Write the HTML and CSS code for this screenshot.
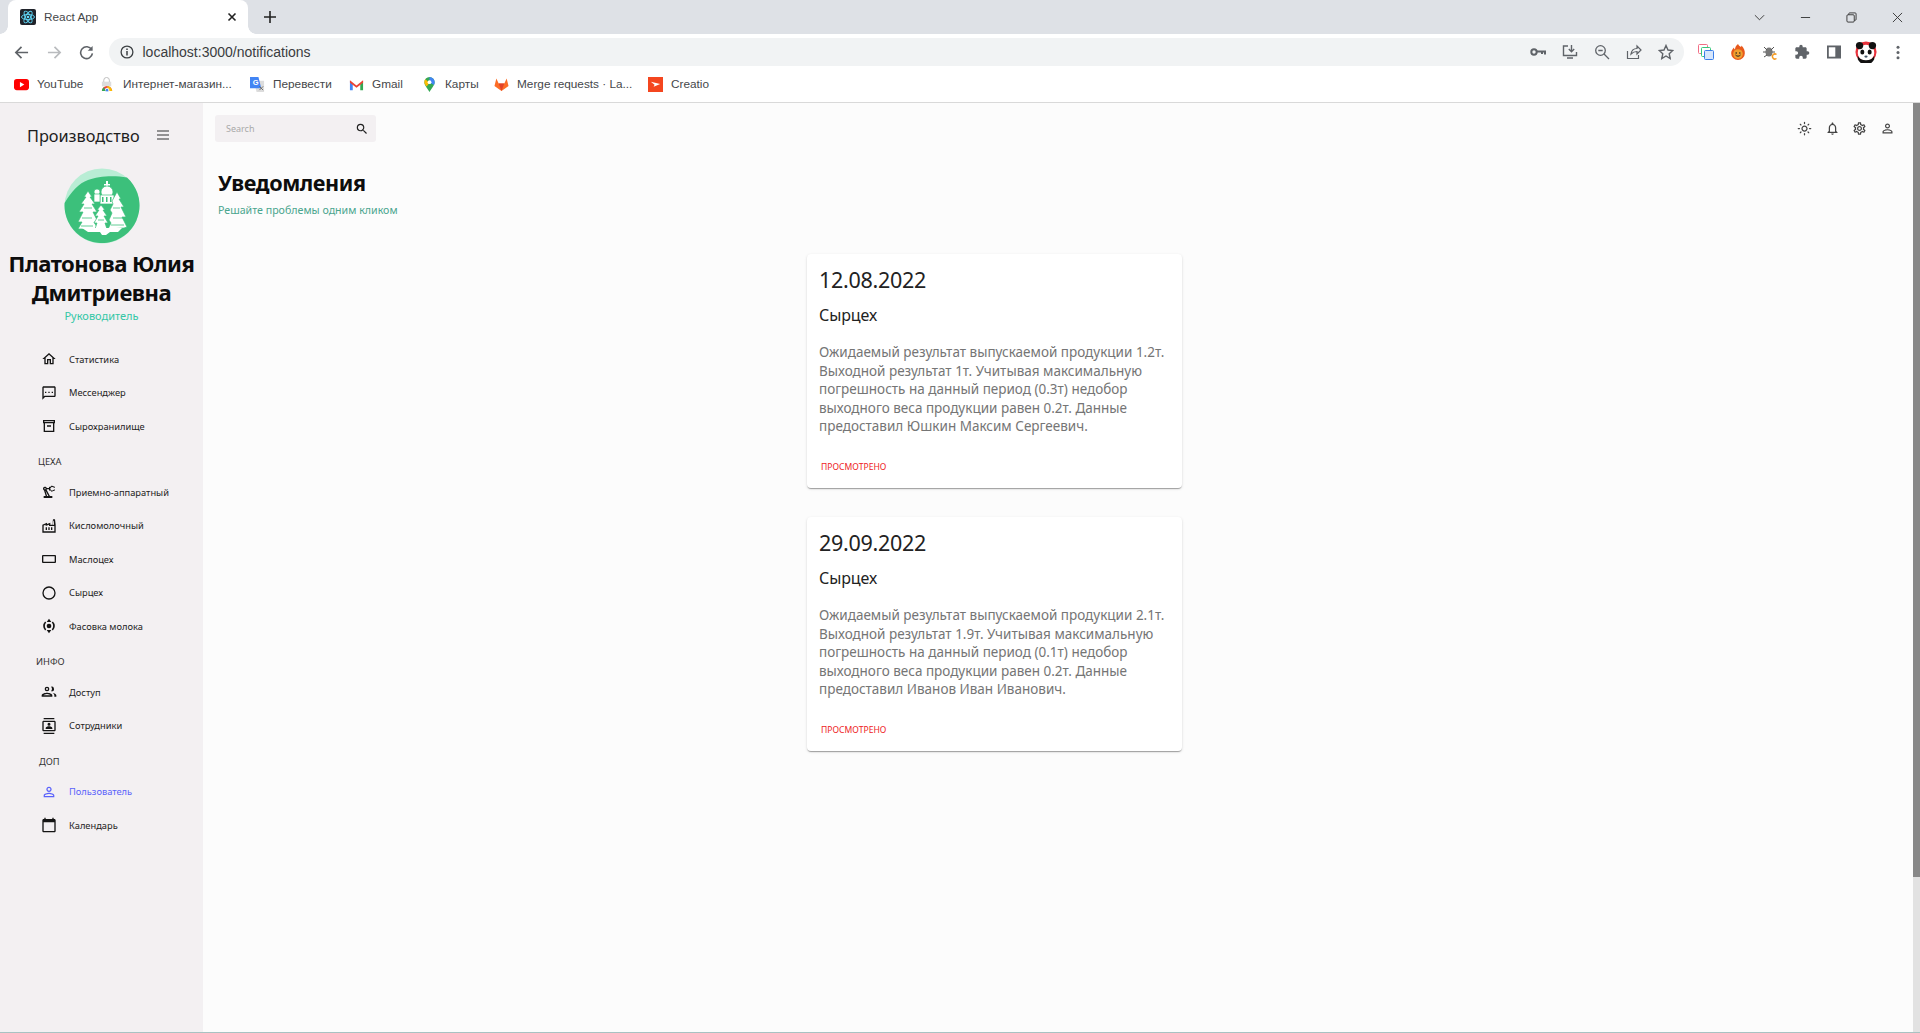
FILE: index.html
```html
<!DOCTYPE html>
<html lang="ru">
<head>
<meta charset="utf-8">
<title>React App</title>
<link rel="stylesheet" href="styles.css">
</head>
<body>
<header class="chrome">
  <div class="tabstrip">
    <div class="tab">
      <svg class="fav" viewBox="0 0 16 16"><rect width="16" height="16" rx="2" fill="#20232a"/><g fill="none" stroke="#61dafb" stroke-width=".9"><ellipse cx="8" cy="8" rx="6.5" ry="2.6"/><ellipse cx="8" cy="8" rx="6.5" ry="2.6" transform="rotate(60 8 8)"/><ellipse cx="8" cy="8" rx="6.5" ry="2.6" transform="rotate(120 8 8)"/></g><circle cx="8" cy="8" r="1.3" fill="#61dafb"/></svg>
      <span class="tabtitle">React App</span>
      <svg class="tabx" viewBox="0 0 10 10"><path d="M1.5 1.5l7 7M8.5 1.5l-7 7" stroke="#222" stroke-width="1.6"/></svg>
    </div>
    <svg class="plus" viewBox="0 0 12 12"><path d="M6 0v12M0 6h12" stroke="#222" stroke-width="1.6"/></svg>
    <div class="winbtns">
      <svg viewBox="0 0 12 8"><path d="M1 1.5l5 5 5-5" fill="none" stroke="#333" stroke-width="1"/></svg>
      <svg viewBox="0 0 12 12"><path d="M1 6h10" stroke="#333" stroke-width="1"/></svg>
      <svg viewBox="0 0 12 12"><path d="M3 3V2a1 1 0 0 1 1-1h6a1 1 0 0 1 1 1v6a1 1 0 0 1-1 1H9" fill="none" stroke="#333"/><rect x="1" y="3" width="8" height="8" rx="1.2" fill="none" stroke="#333"/></svg>
      <svg viewBox="0 0 12 12"><path d="M1 1l10 10M11 1L1 11" stroke="#333" stroke-width="1"/></svg>
    </div>
  </div>
  <div class="toolbar">
    <svg class="nav" viewBox="0 0 16 16"><path d="M15 8H2M8 2L2 8l6 6" fill="none" stroke="#5f6368" stroke-width="1.8"/></svg>
    <svg class="nav" viewBox="0 0 16 16"><path d="M1 8h13M8 2l6 6-6 6" fill="none" stroke="#b9bbbe" stroke-width="1.8"/></svg>
    <svg class="nav" viewBox="0 0 16 16"><path d="M13.5 5A6.3 6.3 0 1 0 14.3 9" fill="none" stroke="#5f6368" stroke-width="1.7"/><path d="M14.5 1v5.2H9.3z" fill="#5f6368"/></svg>
    <div class="omnibox">
      <svg class="info" viewBox="0 0 14 14"><circle cx="7" cy="7" r="5.9" fill="none" stroke="#3c4043" stroke-width="1.3"/><path d="M7 6v4.4M7 3.4v1.5" stroke="#3c4043" stroke-width="1.5"/></svg>
      <span class="url">localhost:3000/notifications</span>
      <div class="omni-icons">
        <svg viewBox="0 0 16 16"><circle cx="4" cy="8" r="2.7" fill="none" stroke="#5f6368" stroke-width="2"/><path d="M6.5 7.5H15v3M12 8v2" fill="none" stroke="#5f6368" stroke-width="2"/></svg>
        <svg viewBox="0 0 16 16"><path d="M6 2H1.5v9.5h13V8M9.5 1v6.5M6.8 5l2.700 2.700L12.200 5M5 14h6" fill="none" stroke="#5f6368" stroke-width="1.4"/></svg>
        <svg viewBox="0 0 16 16"><circle cx="6.5" cy="6.5" r="4.8" fill="none" stroke="#5f6368" stroke-width="1.3"/><path d="M10 10l5 5M4.300 6.500h4.400" stroke="#5f6368" stroke-width="1.3"/></svg>
        <svg viewBox="0 0 16 16"><path d="M1.500 7v7.500h11V11M5 10c.5-3.500 3-5.500 6-5.500V2l4 4-4 4V7.500c-2.500 0-4.500 1-6 2.500z" fill="none" stroke="#5f6368" stroke-width="1.2"/></svg>
        <svg viewBox="0 0 16 16"><path d="M8 1.500l2 4.500 4.800.5-3.600 3.200 1 4.800L8 12l-4.200 2.500 1-4.800L1.200 6.500 6 6z" fill="none" stroke="#5f6368" stroke-width="1.4"/></svg>
      </div>
    </div>
    <div class="ext-icons">
      <svg viewBox="0 0 16 16"><rect x=".5" y=".5" width="9" height="9" rx="1" fill="#fff" stroke="#f26d85"/><rect x="3.500" y="3.500" width="9" height="9" rx="1" fill="#fff" stroke="#34c77b"/><rect x="6.500" y="6.500" width="9" height="9" rx="1" fill="#d6e6fc" stroke="#3a7ee8"/></svg>
      <svg viewBox="0 0 16 16"><path d="M8 0c1 2 2 2.500 3 3 0 0 .5-.8.500-1.500C14 4 15 7 14.800 9.500A6.800 6.500 0 0 1 1.200 9.500C1 7 2.500 5 4 3.500c0 1 .3 1.500 1 2C5 3.500 6 1.500 8 0z" fill="#e8591c"/><circle cx="8" cy="10" r="4.800" fill="#f0a030"/><circle cx="6.200" cy="9" r=".8" fill="#222"/><circle cx="9.800" cy="9" r=".8" fill="#222"/><path d="M5.500 11c1.500 1.600 3.500 1.600 5 0" fill="none" stroke="#222"/></svg>
      <svg viewBox="0 0 16 16"><ellipse cx="7" cy="8" rx="3.500" ry="4.500" fill="#777"/><path d="M2 3l3 3M12 3L9 6M1 8h3M10 8h3M2 13l3-2" stroke="#555" stroke-width="1"/><path d="M14.500 10.500a2.500 2.500 0 1 0 0 4" fill="none" stroke="#f59b23" stroke-width="1.500"/></svg>
      <svg viewBox="0 0 24 24"><path d="M20.500 11H19V7c0-1.100-.9-2-2-2h-4V3.500a2.500 2.500 0 0 0-5 0V5H4c-1.100 0-2 .9-2 2v3.800h1.500a2.700 2.700 0 0 1 0 5.400H2V20c0 1.100.9 2 2 2h3.800v-1.500a2.700 2.700 0 0 1 5.400 0V22H17c1.100 0 2-.9 2-2v-4h1.500a2.500 2.500 0 0 0 0-5z" fill="#5f6368"/></svg>
      <svg viewBox="0 0 16 16"><rect x="1" y="1.500" width="14" height="13" fill="#5f6368"/><rect x="2.800" y="3.300" width="6.500" height="9.400" fill="#fff"/></svg>
      <svg class="panda" viewBox="0 0 24 24"><circle cx="12" cy="12" r="11.500" fill="#e8323c"/><circle cx="12" cy="13" r="9" fill="#fff"/><circle cx="5" cy="5" r="4" fill="#111"/><circle cx="19" cy="5" r="4" fill="#111"/><ellipse cx="8" cy="12" rx="2.200" ry="2.800" fill="#111"/><ellipse cx="16" cy="12" rx="2.200" ry="2.800" fill="#111"/><ellipse cx="12" cy="17" rx="1.800" ry="1.200" fill="#456"/><path d="M3 16a10 9 0 0 0 18 0v4a10 10 0 0 1-18 0z" fill="#111"/></svg>
      <svg class="dots" viewBox="0 0 4 16"><circle cx="2" cy="2.500" r="1.600" fill="#5f6368"/><circle cx="2" cy="8" r="1.600" fill="#5f6368"/><circle cx="2" cy="13.500" r="1.600" fill="#5f6368"/></svg>
    </div>
  </div>
  <div class="bookmarks">
    <a class="bm bm-yt"><svg viewBox="0 0 16 16"><rect y="2" width="16" height="12" rx="3" fill="#f00"/><path d="M6.300 5.200v5.600L11 8z" fill="#fff"/></svg>YouTube</a>
    <a class="bm bm-shop"><svg viewBox="0 0 16 16"><path d="M4 6V3.500a3 3 0 0 1 6 0V6" fill="none" stroke="#bbb"/><rect x="2" y="5" width="10" height="5" fill="#ddd"/><path d="M2 15a5.500 5.500 0 0 1 11 0z" fill="#e8453c"/><path d="M7.500 9.500A5.500 5.500 0 0 1 13 15H9z" fill="#fbbc04"/><circle cx="7.500" cy="14" r="2" fill="#4285f4" stroke="#fff"/><path d="M2 15a5 5 0 0 1 2-4l2 4z" fill="#34a853"/></svg>Интернет-магазин...</a>
    <a class="bm bm-tr"><svg viewBox="0 0 16 16"><path d="M4 4h11v12H7z" fill="#ddd"/><path d="M0 0h9l3 12H0z" fill="#4285f4"/><text x="3" y="9" class="gtext">G</text><path d="M10 10l4 4M14 10l-4 4" stroke="#666"/></svg>Перевести</a>
    <a class="bm bm-gm"><svg viewBox="0 0 16 16"><path d="M1 4v10h3V7z" fill="#4285f4"/><path d="M15 4v10h-3V7z" fill="#34a853"/><path d="M1 3.500L8 9l7-5.500V6L8 11.500 1 6z" fill="#ea4335"/></svg>Gmail</a>
    <a class="bm bm-map"><svg viewBox="0 0 16 16"><path d="M8 0a5.500 5.500 0 0 0-5.500 5.500C2.500 9 6 12 8 16c2-4 5.500-7 5.500-10.500A5.500 5.500 0 0 0 8 0z" fill="#34a853"/><path d="M8 0a5.500 5.500 0 0 1 5.500 5.500c0 1-.3 2-.8 3L8 5.500z" fill="#4285f4"/><path d="M3.500 2.500L8 6 5 10C3.500 8.500 2.500 7 2.500 5.500c0-1 .3-2.200 1-3z" fill="#fbbc04"/><circle cx="8" cy="5.500" r="2" fill="#fff"/></svg>Карты</a>
    <a class="bm bm-gl"><svg viewBox="0 0 16 16"><path d="M8 15L.5 9.500 2.500 1.500 5 7h6l2.500-5.500 2 8z" fill="#fc6d26"/><path d="M8 15L5 7h6z" fill="#e24329"/></svg>Merge requests · La...</a>
    <a class="bm bm-cr"><svg viewBox="0 0 16 16"><rect width="16" height="16" fill="#f4461f"/><path d="M3 5l10 2.500L6 10.500l1-2.200z" fill="#fff"/></svg>Creatio</a>
  </div>
</header>

<div class="app">
  <aside class="sidebar">
    <div class="brand"><span class="brand-name">Производство</span>
      <svg class="burger" viewBox="0 0 12 10"><path d="M0 1h12M0 5h12M0 9h12" stroke="#333" stroke-width="1.100"/></svg></div>
    <div class="profile">
      <svg class="avatar" viewBox="0 0 76 76">
        <circle cx="38" cy="38" r="37.500" fill="#b9edd5"/>
        <path d="M.6 35C7 24 15 15 24 12 34 8 50 7 63 9.500A37.500 37.500 0 1 1 .6 35z" fill="#3cc07b"/>
        <g fill="#fff" stroke="#3cc07b" stroke-width=".7">
          <path stroke="none" d="M42 13h2v3h2v1.500h-2v2h-2v-2h-2V16h2z"/>
          <circle cx="43" cy="24" r="6"/>
          <rect x="36" y="27" width="14" height="9"/>
          <circle cx="33" cy="24" r="3"/>
          <rect x="30" y="26" width="6" height="8"/>
          <path d="M53 24L57 31 55 31 60 39 57 39 62 49 58 49 63 59 60 60 44 61 47 55 45 52 48 45 46 42 49 36 48 33Z"/>
          <path d="M24 23L28 29 26 29 31 36 28 36 33 44 29 44 34 54 30 54 34 61 14 61 18 54 14 54 19 44 15 44 20 36 17 36 22 29 20 29Z"/>
          <path d="M37 37L41 42 39 42 43 48 40 48 44 55 41 55 43 61 31 61 33 55 30 55 34 48 31 48 35 42 33 42Z"/>
          <path stroke="none" d="M18 60H58L54 64H46L42 67H38L36 64H24Z"/>
        </g>
        <g fill="#3cc07b"><rect x="38" y="29" width="1.500" height="5"/><rect x="42" y="29" width="1.500" height="5"/><rect x="46" y="29" width="1.500" height="5"/></g>
        <g stroke="#3cc07b" stroke-width=".8" fill="none"><path d="M18 50h10M20 40h8M17 58h12M49 50h10M49 40h7M47 57h13M34 52h6"/></g>
      </svg>
      <h2 class="person">Платонова Юлия Дмитриевна</h2>
      <div class="role">Руководитель</div>
    </div>
    <nav class="menu">
      <a class="item"><svg viewBox="0 0 24 24"><path d="M12 5.690l5 4.500V18h-2v-6H9v6H7v-7.810l5-4.500M12 3L2 12h3v8h6v-6h2v6h6v-8h3L12 3z"/></svg>Статистика</a>
      <a class="item"><svg viewBox="0 0 24 24"><path d="M4 4h16v12H5.170L4 17.170V4m0-2c-1.100 0-1.990.9-1.990 2L2 22l4-4h14c1.100 0 2-.9 2-2V4c0-1.100-.9-2-2-2H4zm2 10h2v-2H6v2zm5 0h2v-2h-2v2zm5 0h2v-2h-2v2z"/></svg>Мессенджер</a>
      <a class="item"><svg viewBox="0 0 24 24"><path d="M3 3h18v5h-1v13H4V8H3V3zm2 2v1h14V5H5zm1 3v11h12V8H6zm3 3h6v2H9v-2z"/></svg>Сырохранилище</a>
      <div class="label lb-ceh">ЦЕХА</div>
      <a class="item"><svg viewBox="0 0 24 24"><path d="M19.930 8.350l-3.600 1.680L14 7.700V6.300l2.330-2.330 3.600 1.680c.38.180.82.010 1-.36.180-.38.010-.82-.36-1L16.650 2.600c-.38-.180-.83-.1-1.130.2l-1.740 1.740C13.600 4.220 13.320 4 13 4c-.55 0-1 .45-1 1v1H8.820C8.340 4.650 6.980 3.730 5.400 4.070c-1.160.25-2.150 1.250-2.360 2.430-.22 1.320.46 2.470 1.480 3.080L7.080 18H4v3h13v-3h-3.620L8.410 8.770c.17-.24.310-.49.41-.77H12v1c0 .55.45 1 1 1 .32 0 .6-.22.78-.54l1.740 1.740c.3.3.75.38 1.130.2l3.920-1.830c.38-.180.54-.62.36-1-.180-.37-.62-.54-1-.36zM6 8c-.55 0-1-.45-1-1 0-.56.45-1 1-1s1 .44 1 1c0 .55-.45 1-1 1zm5.110 10H9.170l-2.460-8h.1l4.300 8z"/></svg>Приемно-аппаратный</a>
      <a class="item"><svg viewBox="0 0 24 24"><path d="M22 22H2V10l7-3v2l5-2v3h3l1-8h3l1 8V22zM12 9.950l-5 2V10l-3 1.320V20h16v-8h-8V9.950zM11 18h2v-4h-2V18zM7 18h2v-4H7V18zM17 14h-2v4h2V14zM19.600 10l-.7-6h-.8l-.7 6H19.600z"/></svg>Кисломолочный</a>
      <a class="item"><svg viewBox="0 0 24 24"><path d="M3 6h18a1.500 1.500 0 0 1 1.500 1.500v9A1.500 1.500 0 0 1 21 18H3a1.500 1.500 0 0 1-1.500-1.500v-9A1.500 1.500 0 0 1 3 6zm.5 2v8h17V8h-17z"/></svg>Маслоцех</a>
      <a class="item"><svg viewBox="0 0 24 24"><path d="M12 2a10 10 0 1 0 0 20 10 10 0 0 0 0-20zm0 18a8 8 0 1 1 0-16 8 8 0 0 1 0 16z"/></svg>Сырцех</a>
      <a class="item"><svg class="ic-stroke" viewBox="0 0 24 24"><path d="M7 6A8.500 8.500 0 0 0 7 18M17 6A8.500 8.500 0 0 1 17 18"/><path class="solid" d="M12 1l3.500 5h-7zM12 23l-3.500-5h7z"/><circle class="solid" cx="12" cy="12" r="3.500"/></svg>Фасовка молока</a>
      <div class="label lb-info">ИНФО</div>
      <a class="item"><svg viewBox="0 0 24 24"><path d="M16 11a3.500 3.500 0 1 0-1-6.850 5 5 0 0 1 0 6.700c.3.100.65.150 1 .150zM9 11a3.500 3.500 0 1 0 0-7 3.500 3.500 0 0 0 0 7zm0-5a1.500 1.500 0 1 1 0 3 1.500 1.500 0 0 1 0-3zm0 7c-2.700 0-8 1.300-8 4v2h16v-2c0-2.700-5.300-4-8-4zm-5.500 4c.6-.7 3-2 5.500-2s4.900 1.300 5.500 2h-11zM17.500 13.500c1.500 1 2.500 2 2.500 3.500v2h3v-2c0-2-3-3.200-5.500-3.500z"/></svg>Доступ</a>
      <a class="item"><svg viewBox="0 0 24 24"><path d="M20 0H4v2h16V0zM4 24h16v-2H4v2zM20 4H4c-1.100 0-2 .9-2 2v12c0 1.100.9 2 2 2h16c1.100 0 2-.9 2-2V6c0-1.100-.9-2-2-2zm0 14H4V6h16v12zm-8-6.250A2.250 2.250 0 1 0 12 7.250a2.250 2.250 0 0 0 0 4.500zM12 12.500c-1.700 0-5 .85-5 2.500V16.500h10V15c0-1.650-3.300-2.500-5-2.500z"/></svg>Сотрудники</a>
      <div class="label lb-dop">ДОП</div>
      <a class="item active"><svg viewBox="0 0 24 24"><path d="M12 5.900a2.100 2.100 0 1 1 0 4.200 2.100 2.100 0 0 1 0-4.200m0 9c2.970 0 6.100 1.460 6.100 2.100v1.100H5.900V17c0-.64 3.130-2.100 6.100-2.100M12 4C9.790 4 8 5.790 8 8s1.790 4 4 4 4-1.790 4-4-1.790-4-4-4zm0 9c-2.670 0-8 1.340-8 4v3h16v-3c0-2.660-5.330-4-8-4z"/></svg>Пользователь</a>
      <a class="item"><svg viewBox="0 0 24 24"><path d="M20 3h-1V1h-2v2H7V1H5v2H4c-1.100 0-2 .9-2 2v16c0 1.100.9 2 2 2h16c1.100 0 2-.9 2-2V5c0-1.100-.9-2-2-2zm0 18H4V8h16v13z"/></svg>Календарь</a>
    </nav>
  </aside>
  <main class="main">
    <div class="topbar">
      <div class="search"><span class="search-ph">Search</span>
        <svg class="search-ic" viewBox="0 0 24 24"><path d="M15.500 14h-.79l-.28-.27A6.470 6.470 0 0 0 16 9.500 6.500 6.500 0 1 0 9.500 16c1.610 0 3.090-.59 4.230-1.570l.27.280v.79l5 4.990L20.490 19l-4.990-5zm-6 0C7.010 14 5 11.990 5 9.500S7.010 5 9.500 5 14 7.010 14 9.500 11.990 14 9.500 14z"/></svg>
      </div>
      <div class="top-icons">
        <svg viewBox="0 0 24 24"><path d="M12 9c1.650 0 3 1.350 3 3s-1.350 3-3 3-3-1.350-3-3 1.350-3 3-3m0-2c-2.760 0-5 2.240-5 5s2.240 5 5 5 5-2.240 5-5-2.240-5-5-5zM2 13h2c.55 0 1-.45 1-1s-.45-1-1-1H2c-.55 0-1 .45-1 1s.45 1 1 1zm18 0h2c.55 0 1-.45 1-1s-.45-1-1-1h-2c-.55 0-1 .45-1 1s.45 1 1 1zM11 2v2c0 .55.45 1 1 1s1-.45 1-1V2c0-.55-.45-1-1-1s-1 .45-1 1zm0 18v2c0 .55.45 1 1 1s1-.45 1-1v-2c0-.55-.45-1-1-1s-1 .45-1 1zM5.990 4.580a.996.996 0 0 0-1.410 0 .996.996 0 0 0 0 1.410l1.060 1.060c.39.39 1.030.39 1.410 0s.39-1.030 0-1.410L5.990 4.580zm12.370 12.370a.996.996 0 0 0-1.410 0 .996.996 0 0 0 0 1.410l1.060 1.060c.39.39 1.030.39 1.410 0a.996.996 0 0 0 0-1.410l-1.060-1.060zm1.060-10.960a.996.996 0 0 0 0-1.410.996.996 0 0 0-1.410 0l-1.060 1.060c-.39.39-.39 1.030 0 1.410s1.030.39 1.410 0l1.060-1.060zM7.050 18.360a.996.996 0 0 0 0-1.410.996.996 0 0 0-1.410 0l-1.060 1.060c-.39.39-.39 1.030 0 1.410s1.030.39 1.410 0l1.060-1.060z"/></svg>
        <svg viewBox="0 0 24 24"><path d="M12 22c1.100 0 2-.9 2-2h-4c0 1.100.9 2 2 2zm6-6v-5c0-3.070-1.630-5.640-4.500-6.320V4c0-.83-.67-1.500-1.500-1.500s-1.500.67-1.500 1.500v.68C7.640 5.360 6 7.920 6 11v5l-2 2v1h16v-1l-2-2zm-2 1H8v-6c0-2.480 1.510-4.500 4-4.500s4 2.020 4 4.500v6z"/></svg>
        <svg viewBox="0 0 24 24"><path d="M19.430 12.980c.04-.32.070-.64.070-.98s-.03-.66-.07-.98l2.110-1.650c.19-.15.24-.42.120-.64l-2-3.460c-.12-.22-.39-.3-.61-.22l-2.490 1c-.52-.4-1.080-.73-1.690-.98l-.38-2.650A.488.488 0 0 0 14 2h-4c-.25 0-.46.180-.49.420l-.38 2.650c-.61.25-1.170.59-1.690.98l-2.490-1a.566.566 0 0 0-.18-.03c-.17 0-.34.09-.43.25l-2 3.460c-.13.22-.07.49.12.64l2.110 1.650c-.04.32-.07.65-.07.98s.03.66.07.98l-2.110 1.650c-.19.15-.24.42-.12.64l2 3.460c.12.22.39.3.61.22l2.490-1c.52.4 1.080.73 1.690.98l.38 2.650c.03.24.24.42.49.42h4c.25 0 .46-.18.49-.42l.38-2.650c.61-.25 1.170-.59 1.690-.98l2.490 1c.06.02.12.03.18.03.17 0 .34-.09.43-.25l2-3.460c.12-.22.07-.49-.12-.64l-2.110-1.650zm-1.980-1.710c.04.31.05.52.05.73 0 .21-.02.43-.05.73l-.14 1.130.89.7 1.080.84-.7 1.210-1.270-.51-1.040-.42-.9.68c-.43.32-.84.56-1.250.73l-1.060.43-.16 1.130-.2 1.350h-1.400l-.19-1.350-.16-1.130-1.060-.43c-.43-.18-.83-.41-1.230-.71l-.91-.7-1.060.43-1.270.51-.7-1.210 1.080-.84.89-.7-.14-1.130c-.03-.31-.05-.54-.05-.74s.02-.43.05-.73l.14-1.130-.89-.7-1.080-.84.7-1.210 1.270.51 1.040.42.9-.68c.43-.32.84-.56 1.250-.73l1.060-.43.16-1.130.2-1.350h1.390l.19 1.350.16 1.130 1.060.43c.43.18.83.41 1.230.71l.91.7 1.060-.43 1.270-.51.7 1.210-1.070.85-.89.7.14 1.130zM12 8c-2.210 0-4 1.790-4 4s1.790 4 4 4 4-1.790 4-4-1.790-4-4-4zm0 6c-1.100 0-2-.9-2-2s.9-2 2-2 2 .9 2 2-.9 2-2 2z"/></svg>
        <svg viewBox="0 0 24 24"><path d="M12 5.900a2.100 2.100 0 1 1 0 4.200 2.100 2.100 0 0 1 0-4.200m0 9c2.970 0 6.100 1.460 6.100 2.100v1.100H5.900V17c0-.64 3.130-2.100 6.100-2.100M12 4C9.790 4 8 5.790 8 8s1.790 4 4 4 4-1.790 4-4-1.790-4-4-4zm0 9c-2.670 0-8 1.340-8 4v3h16v-3c0-2.660-5.330-4-8-4z"/></svg>
      </div>
    </div>
    <div class="heading">
      <h1>Уведомления</h1>
      <p>Решайте проблемы одним кликом</p>
    </div>
    <section class="cards">
      <article class="card">
        <div class="date">12.08.2022</div>
        <div class="shop">Сырцех</div>
        <p class="text">Ожидаемый результат выпускаемой продукции 1.2т. Выходной результат 1т. Учитывая максимальную погрешность на данный период (0.3т) недобор выходного веса продукции равен 0.2т. Данные предоставил Юшкин Максим Сергеевич.</p>
        <div class="seen">ПРОСМОТРЕНО</div>
      </article>
      <article class="card">
        <div class="date">29.09.2022</div>
        <div class="shop">Сырцех</div>
        <p class="text">Ожидаемый результат выпускаемой продукции 2.1т. Выходной результат 1.9т. Учитывая максимальную погрешность на данный период (0.1т) недобор выходного веса продукции равен 0.2т. Данные предоставил Иванов Иван Иванович.</p>
        <div class="seen">ПРОСМОТРЕНО</div>
      </article>
    </section>
  </main>
  <div class="scrollbar"><div class="thumb"></div></div>
</div>
</body>
</html>
```
FILE: styles.css
```css
* { box-sizing: border-box; }
html, body { margin: 0; height: 100%; overflow: hidden; }
body { font-family: "Noto Sans", "Open Sans", sans-serif; background: #fcfcfc; color: #141414; display: flex; flex-direction: column; }
svg { display: block; flex: none; }

.chrome { flex: none; background: #fff; border-bottom: 1px solid #d9d9d9; height: 103px; }
.tabstrip { height: 34px; background: #dee1e6; display: flex; align-items: center; }
.tab { position: relative; width: 240px; height: 34px; margin-left: 8px; background: #fff; border-radius: 8px 8px 0 0; display: flex; align-items: center; padding: 0 11px 0 12px; }
.tab::before, .tab::after { content: ""; position: absolute; bottom: 0; width: 8px; height: 8px; }
.tab::before { left: -8px; background: radial-gradient(circle at 0 0, #dee1e6 7.5px, #fff 8px); }
.tab::after { right: -8px; background: radial-gradient(circle at 100% 0, #dee1e6 7.5px, #fff 8px); }
.fav { width: 16px; height: 16px; }
.tabtitle { font-family: "Liberation Sans", sans-serif; font-size: 11.800px; color: #45474a; margin-left: 8px; flex: 1; }
.tabx { width: 10px; height: 10px; }
.plus { width: 12px; height: 12px; margin-left: 16px; }
.winbtns { margin-left: auto; display: flex; align-items: center; gap: 35px; padding-right: 17px; }
.winbtns svg { width: 11px; height: 11px; }

.toolbar { height: 36px; display: flex; align-items: center; padding-left: 14px; }
.nav { width: 15px; height: 15px; margin-right: 17.500px; }
.nav:nth-child(3) { margin-right: 14.500px; }
.omnibox { width: 1575px; height: 28px; background: #f1f3f4; border-radius: 14px; display: flex; align-items: center; padding-left: 11px; }
.info { width: 14px; height: 14px; }
.url { font-family: "Liberation Sans", sans-serif; font-size: 14px; color: #3a3c40; margin-left: 9px; }
.omni-icons { margin-left: auto; display: flex; align-items: center; gap: 16px; padding-right: 10px; }
.omni-icons svg { width: 16px; height: 16px; }
.ext-icons { display: flex; align-items: center; gap: 16px; margin-left: 14px; }
.ext-icons svg { width: 16px; height: 16px; }
.ext-icons .panda { width: 22px; height: 22px; margin: 0 -3px; }
.ext-icons .dots { width: 4px; height: 15px; margin-left: 6px; }

.bookmarks { height: 28px; display: flex; align-items: center; padding-left: 14px; font-family: "Liberation Sans", sans-serif; font-size: 11.800px; color: #45474a; }
.bm { display: flex; align-items: center; gap: 8px; white-space: nowrap; }
.bm svg { width: 15px; height: 15px; }
.bm-yt { width: 86px; }
.bm-shop { width: 150px; }
.bm-tr { width: 99px; }
.bm-gm { width: 73px; }
.bm-map { width: 72px; }
.bm-gl { width: 154px; }
.gtext { font-size: 8px; fill: #fff; font-family: "Liberation Sans", sans-serif; font-weight: 700; }

.app { flex: 1; min-height: 0; display: flex; position: relative; border-bottom: 1px solid #a8c2c2; }
.sidebar { width: 203px; flex: none; background: #f3f0f2; display: flex; flex-direction: column; }
.brand { height: 65px; display: flex; align-items: center; padding-left: 27px; }
.brand-name { font-size: 16.300px; color: #1d1d1d; }
.burger { width: 12px; height: 10px; margin-left: 17px; margin-top: -2px; }
.profile { display: flex; flex-direction: column; align-items: center; }
.avatar { width: 76px; height: 76px; }
.person { margin: 5px 0 0; font-size: 22.100px; font-weight: 700; line-height: 28.500px; text-align: center; letter-spacing: -.5px; color: #0d0d0d; }
.role { font-size: 11px; line-height: 16px; color: #34c7a6; margin-top: 2px; }
.menu { display: flex; flex-direction: column; margin-top: 18.500px; }
.item { display: flex; align-items: center; height: 33.500px; padding-left: 41px; font-size: 9.300px; color: #232323; }
.item svg { width: 16px; height: 16px; margin-right: 12px; fill: #141414; }
.item .ic-stroke { fill: none; stroke: #141414; stroke-width: 2.500; }
.ic-stroke .solid { fill: #141414; stroke: none; }
.item.active { color: #5a62fb; }
.item.active svg { fill: #5a62fb; }
.label { font-size: 9.300px; height: 32.500px; padding-top: 6px; line-height: 26.500px; color: #333; }
.lb-ceh { padding-left: 38px; }
.lb-info { padding-left: 36px; }
.lb-dop { padding-left: 39px; }

.main { flex: 1; min-width: 0; padding: 12px 25.500px 0 12px; overflow: hidden; }
.topbar { display: flex; justify-content: space-between; align-items: center; height: 27px; }
.search { width: 161px; height: 27px; background: #f3f0f2; border-radius: 3px; display: flex; align-items: center; justify-content: space-between; padding: 0 7px 0 11px; }
.search-ph { font-size: 9px; color: #a9a9a9; }
.search-ic { width: 14px; height: 14px; fill: #222; }
.top-icons { display: flex; gap: 12.500px; align-items: center; }
.top-icons svg { width: 15px; height: 15px; fill: #444; }
.heading { margin: 26px 0 0 3px; }
.heading h1 { margin: 0; font-size: 21.600px; line-height: 30px; font-weight: 700; letter-spacing: -.4px; color: #0d0d0d; }
.heading p { margin: 4px 0 0; font-size: 10.650px; line-height: 16px; color: #4aa58e; }
.cards { display: flex; flex-direction: column; gap: 29px; margin-top: 36px; padding-left: 592px; }
.card { width: 375px; height: 234px; background: #fff; border-radius: 4px; box-shadow: 0 2px 1px -1px rgba(0,0,0,.2), 0 1px 1px rgba(0,0,0,.14), 0 1px 3px rgba(0,0,0,.12); padding: 12px 12px 0; }
.date { font-size: 21.500px; line-height: 28px; letter-spacing: -.3px; color: #222; }
.shop { font-size: 16px; line-height: 22px; margin-top: 10px; color: #222; letter-spacing: -.1px; }
.text { margin: 17px 0 0; font-size: 13.500px; line-height: 18.500px; color: #757575; }
.seen { font-size: 8.600px; line-height: 12px; margin: 25.200px 0 0 2px; color: #ee1c25; }

.scrollbar { position: absolute; right: 0; top: 0; bottom: 0; width: 7px; background: #e2e2e2; }
.thumb { height: 774px; background: #888; }
```
